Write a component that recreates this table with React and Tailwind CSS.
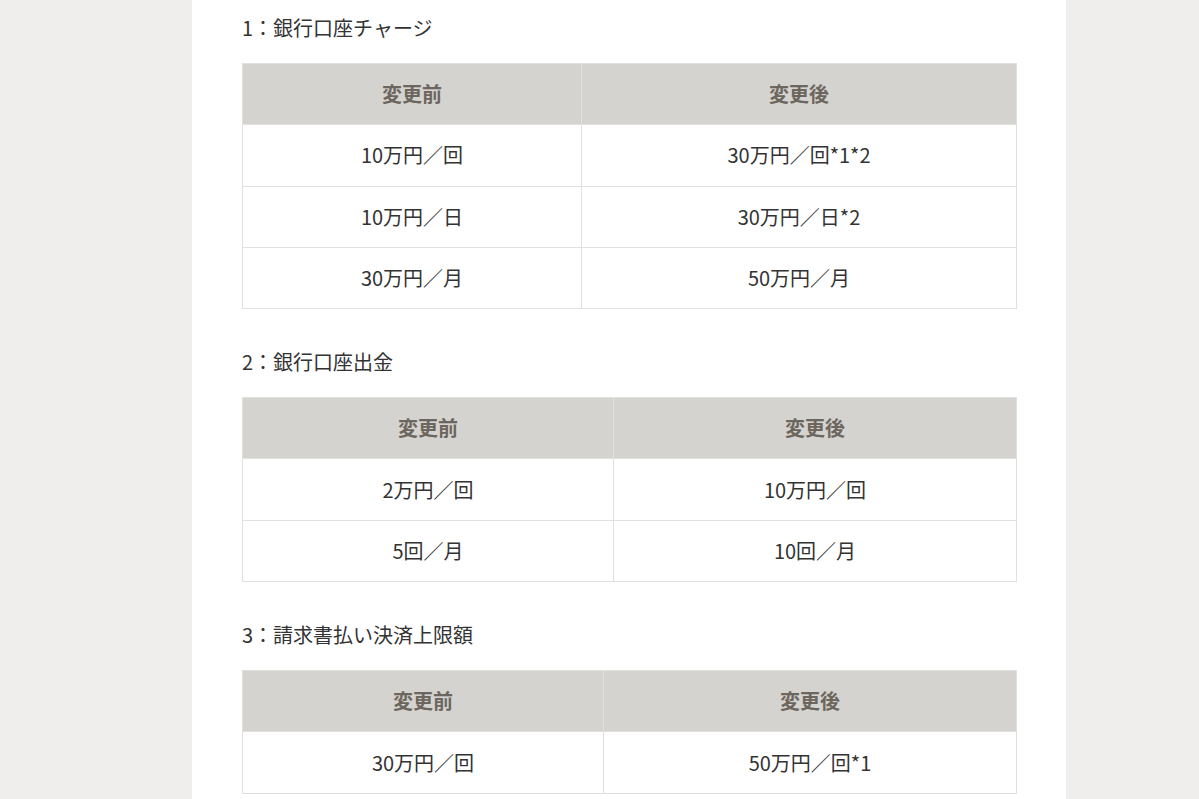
const sections = [
  {
    title: '1：銀行口座チャージ',
    split: 'w-[339px]',
    rows: [
      ['10万円／回', '30万円／回*1*2'],
      ['10万円／日', '30万円／日*2'],
      ['30万円／月', '50万円／月'],
    ],
  },
  {
    title: '2：銀行口座出金',
    split: 'w-[371px]',
    rows: [
      ['2万円／回', '10万円／回'],
      ['5回／月', '10回／月'],
    ],
  },
  {
    title: '3：請求書払い決済上限額',
    split: 'w-[361px]',
    rows: [['30万円／回', '50万円／回*1']],
  },
]

function LimitTable({ split, rows }) {
  return (
    <table className="w-[775px] border-collapse border border-[#e1e0dd] table-fixed">
      <thead>
        <tr className="bg-[#d4d3cf]">
          <th className={`${split} h-[61.3px] border border-[#e1e0dd] text-[20px] font-bold text-[#6c665e]`}>変更前</th>
          <th className="h-[61.3px] border border-[#e1e0dd] text-[20px] font-bold text-[#6c665e]">変更後</th>
        </tr>
      </thead>
      <tbody>
        {rows.map((r, i) => (
          <tr key={i}>
            <td className="h-[61.3px] border border-[#e1e0dd] text-center text-[20px] text-[#333]">{r[0]}</td>
            <td className="h-[61.3px] border border-[#e1e0dd] text-center text-[20px] text-[#333]">{r[1]}</td>
          </tr>
        ))}
      </tbody>
    </table>
  )
}

export default function App() {
  return (
    <div className="min-h-[799px] bg-[#efeeec] font-['Noto_Sans_CJK_JP','Noto_Sans',sans-serif]">
      <div className="w-[874px] min-h-[799px] bg-white pl-[50px] pt-[10px] ml-[192px]">
        {sections.map((s) => (
          <section key={s.title} className="mb-[35px]">
            <h2 className="text-[20px] leading-[36px] text-[#333] mb-[17px]">{s.title}</h2>
            <LimitTable split={s.split} rows={s.rows} />
          </section>
        ))}
      </div>
    </div>
  )
}
